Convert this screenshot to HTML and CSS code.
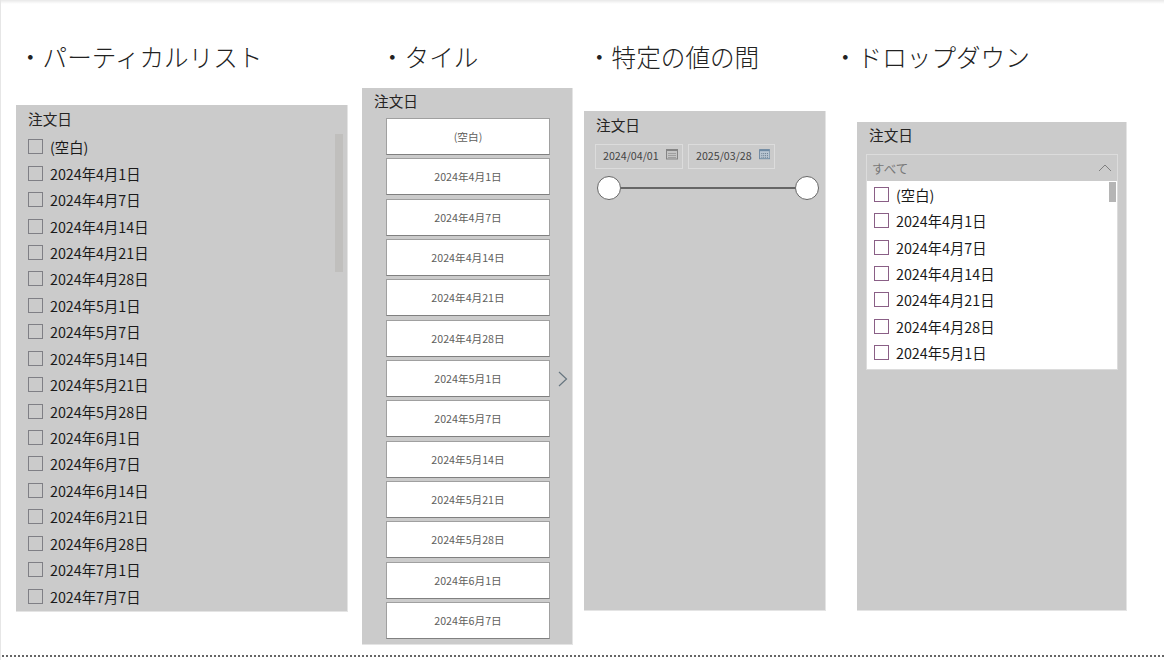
FILE: index.html
```html
<!DOCTYPE html>
<html lang="ja">
<head>
<meta charset="utf-8">
<title>スライサー</title>
<link rel="stylesheet" href="styles.css">
</head>
<body>
<main class="canvas">
  <h2 class="heading h1">・パーティカルリスト</h2>
  <h2 class="heading h2">・タイル</h2>
  <h2 class="heading h3">・特定の値の間</h2>
  <h2 class="heading h4">・ドロップダウン</h2>

  <section class="slicer list-slicer">
    <div class="title">注文日</div>
    <div class="scrollbar"></div>
    <ul class="rows">
      <li class="row"><span class="box"></span>(空白)</li>
      <li class="row"><span class="box"></span>2024年4月1日</li>
      <li class="row"><span class="box"></span>2024年4月7日</li>
      <li class="row"><span class="box"></span>2024年4月14日</li>
      <li class="row"><span class="box"></span>2024年4月21日</li>
      <li class="row"><span class="box"></span>2024年4月28日</li>
      <li class="row"><span class="box"></span>2024年5月1日</li>
      <li class="row"><span class="box"></span>2024年5月7日</li>
      <li class="row"><span class="box"></span>2024年5月14日</li>
      <li class="row"><span class="box"></span>2024年5月21日</li>
      <li class="row"><span class="box"></span>2024年5月28日</li>
      <li class="row"><span class="box"></span>2024年6月1日</li>
      <li class="row"><span class="box"></span>2024年6月7日</li>
      <li class="row"><span class="box"></span>2024年6月14日</li>
      <li class="row"><span class="box"></span>2024年6月21日</li>
      <li class="row"><span class="box"></span>2024年6月28日</li>
      <li class="row"><span class="box"></span>2024年7月1日</li>
      <li class="row"><span class="box"></span>2024年7月7日</li>
    </ul>
  </section>

  <section class="slicer tile-slicer">
    <div class="title">注文日</div>
    <div class="tiles">
      <div class="tile">(空白)</div>
      <div class="tile">2024年4月1日</div>
      <div class="tile">2024年4月7日</div>
      <div class="tile">2024年4月14日</div>
      <div class="tile">2024年4月21日</div>
      <div class="tile">2024年4月28日</div>
      <div class="tile">2024年5月1日</div>
      <div class="tile">2024年5月7日</div>
      <div class="tile">2024年5月14日</div>
      <div class="tile">2024年5月21日</div>
      <div class="tile">2024年5月28日</div>
      <div class="tile">2024年6月1日</div>
      <div class="tile">2024年6月7日</div>
    </div>
    <svg class="chevron" width="10" height="16" viewBox="0 0 10 16"><path d="M1 1l7.5 7L1 15" fill="none" stroke="#66757f" stroke-width="1.2"/></svg>
  </section>

  <section class="slicer range-slicer">
    <div class="title">注文日</div>
    <div class="dates">
      <div class="date date-a">2024/04/01
        <svg class="cal" width="12" height="12" viewBox="0 0 12 12"><rect x=".5" y="1.5" width="11" height="9.5" fill="#c4c4c4" stroke="#858585"/><rect x="1" y="1" width="10" height="2" fill="#858585"/><path d="M2.5 5.5h7M2.5 7.5h7M2.5 9.5h7" stroke="#7a7a7a" stroke-dasharray="1 1"/></svg>
      </div>
      <div class="date date-b">2025/03/28
        <svg class="cal" width="12" height="12" viewBox="0 0 12 12"><rect x=".5" y="1.5" width="11" height="9.5" fill="#b9c6d2" stroke="#6f8aa3"/><rect x="1" y="1" width="10" height="2" fill="#6f8aa3"/><path d="M2.5 5.5h7M2.5 7.5h7M2.5 9.5h7" stroke="#66788a" stroke-dasharray="1 1"/></svg>
      </div>
    </div>
    <div class="slider">
      <span class="knob"></span>
      <span class="track"></span>
      <span class="knob"></span>
    </div>
  </section>

  <section class="slicer drop-slicer">
    <div class="title">注文日</div>
    <div class="drop-head">
      <span>すべて</span>
      <svg width="14" height="8" viewBox="0 0 14 8"><path d="M1 7l6-6 6 6" fill="none" stroke="#808080"/></svg>
    </div>
    <div class="drop-list">
      <div class="drop-thumb"></div>
      <div class="row"><span class="box"></span>(空白)</div>
      <div class="row"><span class="box"></span>2024年4月1日</div>
      <div class="row"><span class="box"></span>2024年4月7日</div>
      <div class="row"><span class="box"></span>2024年4月14日</div>
      <div class="row"><span class="box"></span>2024年4月21日</div>
      <div class="row"><span class="box"></span>2024年4月28日</div>
      <div class="row"><span class="box"></span>2024年5月1日</div>
    </div>
  </section>

  <div class="dotted"></div>
</main>
</body>
</html>
```
FILE: styles.css
```css
* { box-sizing: border-box; }
html, body { margin: 0; padding: 0; background: #fff; }
body {
  width: 1164px;
  height: 660px;
  overflow: hidden;
  font-family: "Noto Sans CJK JP", "Noto Sans", sans-serif;
  color: #252423;
}
.canvas {
  position: relative;
  width: 1164px;
  height: 660px;
  border-left: 1px solid #e6e6e6;
  background: linear-gradient(#e8e8e8, #fafafa 3px, #fff 4px);
}
.heading {
  position: absolute;
  margin: 0;
  top: 38px;
  font-size: 24.6px;
  line-height: 36px;
  font-weight: 300;
  color: #222;
  white-space: nowrap;
}
.h1 { left: 17px; }
.h2 { left: 379px; }
.h3 { left: 586px; }
.h4 { left: 832px; }

.slicer {
  position: absolute;
  background: #cbcbcb;
  border: 1px solid #e4e4e4;
  border-width: 0 1px 1px 0;
}
.title {
  font-size: 14.67px;
  line-height: 20px;
  height: 20px;
}
.list-slicer { left: 15px; top: 105px; width: 332px; height: 507px; padding: 4px 0 0 12px; }
.tile-slicer { left: 361px; top: 88px; width: 211px; height: 557px; padding: 3px 0 0 12px; }
.range-slicer { left: 583px; top: 111px; width: 242px; height: 500px; padding: 4px 0 0 12px; }
.drop-slicer { left: 856px; top: 122px; width: 270px; height: 489px; padding: 3px 0 0 12px; }

.rows { list-style: none; margin: 4.5px 0 0; padding: 0; }
.row {
  display: flex;
  align-items: center;
  height: 26.45px;
  font-size: 14.3px;
  white-space: nowrap;
  color: #1a1a1a;
}
.box {
  flex: none;
  width: 15px;
  height: 15px;
  margin-right: 7px;
  border: 1px solid #7f7f85;
}
.scrollbar {
  position: absolute;
  left: 319px;
  top: 29px;
  width: 8px;
  height: 138px;
  background: #c0bfbd;
}

.tiles {
  display: flex;
  flex-direction: column;
  gap: 3.33px;
  margin: 7px 0 0 12px;
  width: 164px;
}
.tile {
  height: 37px;
  display: flex;
  align-items: center;
  justify-content: center;
  background: #fff;
  border: 1.5px solid #a0a0a0;
  border-bottom-color: #808080;
  font-size: 10.67px;
  color: #605e5c;
  white-space: nowrap;
}
.chevron { position: absolute; left: 196px; top: 283px; }

.dates { display: flex; gap: 5px; margin: 9px 0 0 -1px; }
.date {
  display: flex;
  align-items: center;
  gap: 7px;
  height: 25px;
  padding: 0 4px 3px 7px;
  border: 1px solid #dcdcdc;
  font-size: 10.67px;
  color: #444;
  white-space: nowrap;
}
.date-a { width: 88px; }
.date-b { width: 87px; }
.cal { margin-top: -3px; }
.slider {
  display: flex;
  align-items: center;
  width: 222px;
  margin: 7px 0 0 1px;
}
.knob {
  flex: none;
  width: 24px;
  height: 24px;
  border-radius: 50%;
  background: #fff;
  border: 1.5px solid #666;
}
.track { flex: 1; height: 2.5px; background: #666; }

.drop-head {
  display: flex;
  align-items: center;
  justify-content: space-between;
  margin: 9px 0 0 -3px;
  width: 252px;
  height: 27px;
  padding: 0 5px;
  border: 1px solid #dcdcdc;
  border-bottom: 0;
  font-size: 12.5px;
  color: #777;
}
.drop-list {
  position: relative;
  margin-left: -3px;
  width: 252px;
  height: 189px;
  padding: 0 0 0 7px;
  background: #fff;
  border: 1px solid #dcdcdc;
  border-top: 0;
}
.drop-thumb {
  position: absolute;
  right: 1px;
  top: 1px;
  width: 7px;
  height: 20px;
  background: #b5b5b5;
}
.drop-list .box { border-color: #8a5f86; margin-right: 7px; }
.dotted {
  position: absolute;
  left: 1px;
  right: 0;
  top: 655px;
  border-top: 2px dotted #666;
}
```
